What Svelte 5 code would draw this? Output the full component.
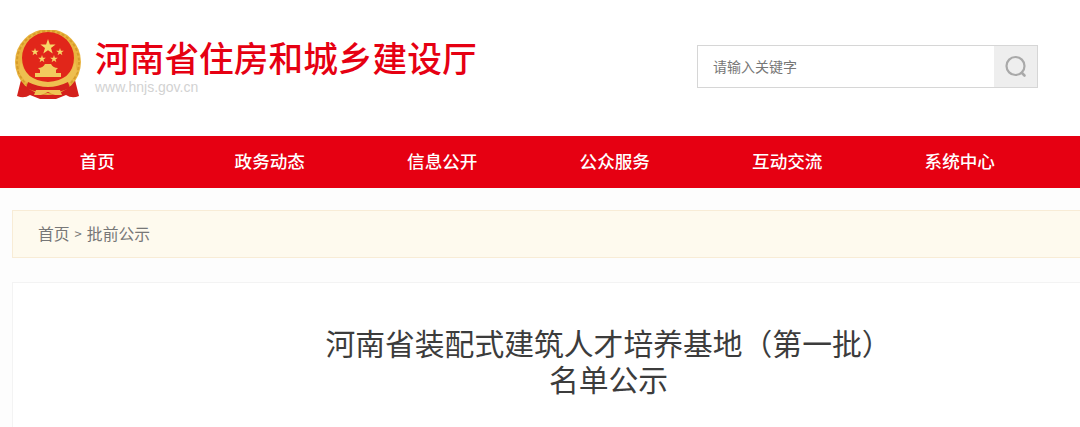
<script>
	const nav = ['首页', '政务动态', '信息公开', '公众服务', '互动交流', '系统中心'];

	const star = (cx, cy, r) => {
		const pts = [];
		for (let i = 0; i < 10; i++) {
			const rad = i % 2 ? r * 0.4 : r;
			const a = -Math.PI / 2 + (i * Math.PI) / 5;
			pts.push(`${(cx + rad * Math.cos(a)).toFixed(1)},${(cy + rad * Math.sin(a)).toFixed(1)}`);
		}
		return pts.join(' ');
	};

	const stars = [
		[34, 17, 8],
		[21, 22, 4],
		[46, 22, 4],
		[28, 29, 4],
		[40, 29, 4]
	];
</script>

<header class="top">
	<div class="brand">
		<svg class="emblem" viewBox="0 0 68 72" width="68" height="72" aria-hidden="true">
			<path d="M7 50 L3 66 Q10 69 16 65 L26 69 H42 L52 65 Q58 69 65 66 L61 50 Z" fill="#d4201c" />
			<circle cx="34" cy="32" r="33" fill="#e9b43f" />
			<circle cx="34" cy="32" r="31" fill="none" stroke="#d79c2b" stroke-width="2" stroke-dasharray="3 2" />
			<circle cx="34" cy="28" r="26" fill="#e1261a" />
			<path d="M7 30 Q10 50 34 52 Q58 50 61 30 L63 42 Q54 60 34 60 Q14 60 5 42 Z" fill="#eebf50" />
			{#each stars as [x, y, r]}
				<polygon points={star(x, y, r)} fill="#f7d768" />
			{/each}
			<path d="M24 38 Q29 38 31 34 H37 Q39 38 44 38 L42 40 V43 H47 V47 H21 V43 H26 V40 Z" fill="#f2ca5e" />
			<path d="M14 52 Q34 62 54 52 L56 58 Q34 68 12 58 Z" fill="#d4201c" />
			<path d="M22 60 H46 L48 65 H41 L34 62 L27 65 H20 Z" fill="#efc454" />
		</svg>
		<div class="names">
			<h1>河南省住房和城乡建设厅</h1>
			<p>www.hnjs.gov.cn</p>
		</div>
	</div>
	<div class="search">
		<span class="hint">请输入关键字</span>
		<span class="go">
			<svg viewBox="0 0 24 24" width="24" height="24" aria-hidden="true">
				<circle cx="11.5" cy="11" r="9" fill="none" stroke="#a9a9a9" stroke-width="2.2" />
				<path d="M18 18 L20.5 20.5" stroke="#a9a9a9" stroke-width="2.6" stroke-linecap="round" />
			</svg>
		</span>
	</div>
</header>

<nav>
	{#each nav as item}
		<a href="#top">{item}</a>
	{/each}
</nav>

<div class="crumb">
	<span>首页</span><span class="sep">&gt;</span><span>批前公示</span>
</div>

<main>
	<h2>河南省装配式建筑人才培养基地（第一批）<br />名单公示</h2>
</main>

<style>
	:global(body) {
		background: #fdfdfd;
		overflow: hidden;
		font-family: "Noto Sans CJK SC", "Liberation Sans", sans-serif;
	}

	.top {
		height: 136px;
		display: flex;
		justify-content: space-between;
		padding: 30px 42px 0 14px;
		box-sizing: border-box;
		background: #fff;
	}

	.brand {
		display: flex;
		gap: 13px;
		align-items: flex-start;
	}

	.names h1 {
		margin: 4px 0 0;
		font-size: 34.7px;
		line-height: 46px;
		font-weight: 500;
		color: #e60012;
		white-space: nowrap;
	}

	.names p {
		margin: 0;
		font-family: "Liberation Sans", sans-serif;
		font-size: 14px;
		line-height: 14px;
		color: #d2d2d2;
	}

	.search {
		width: 341px;
		height: 43px;
		margin-top: 15px;
		display: flex;
		justify-content: space-between;
		border: 1px solid #d6d6d6;
		box-sizing: border-box;
		background: #fff;
	}

	.hint {
		padding-left: 15px;
		font-size: 14px;
		line-height: 40px;
		color: #777;
	}

	.go {
		width: 43px;
		display: flex;
		align-items: center;
		justify-content: center;
		background: #eeeeee;
	}

	nav {
		height: 52px;
		display: flex;
		background: #e60012;
	}

	nav a {
		width: 172.5px;
		padding-left: 22px;
		box-sizing: border-box;
		text-align: center;
		font-size: 17.6px;
		font-weight: 500;
		line-height: 50px;
		color: #fff;
		text-decoration: none;
	}

	.crumb {
		height: 48px;
		margin: 22px 0 0 12px;
		padding: 0 0 2px 25px;
		display: flex;
		gap: 5px;
		align-items: center;
		box-sizing: border-box;
		border: 1px solid #f8ecd6;
		border-right: 0;
		background: #fefaee;
		font-size: 15.8px;
		color: #777;
	}

	.sep {
		font-size: 13px;
	}

	main {
		height: 145px;
		margin: 24px 0 0 12px;
		border: 1px solid #f3f3f3;
		border-right: 0;
		border-bottom: 0;
		background: #fff;
	}

	h2 {
		margin: 0;
		padding: 41px 0 0 124px;
		text-align: center;
		font-size: 29.8px;
		line-height: 36px;
		font-weight: 400;
		color: #3c3c3c;
	}
</style>
